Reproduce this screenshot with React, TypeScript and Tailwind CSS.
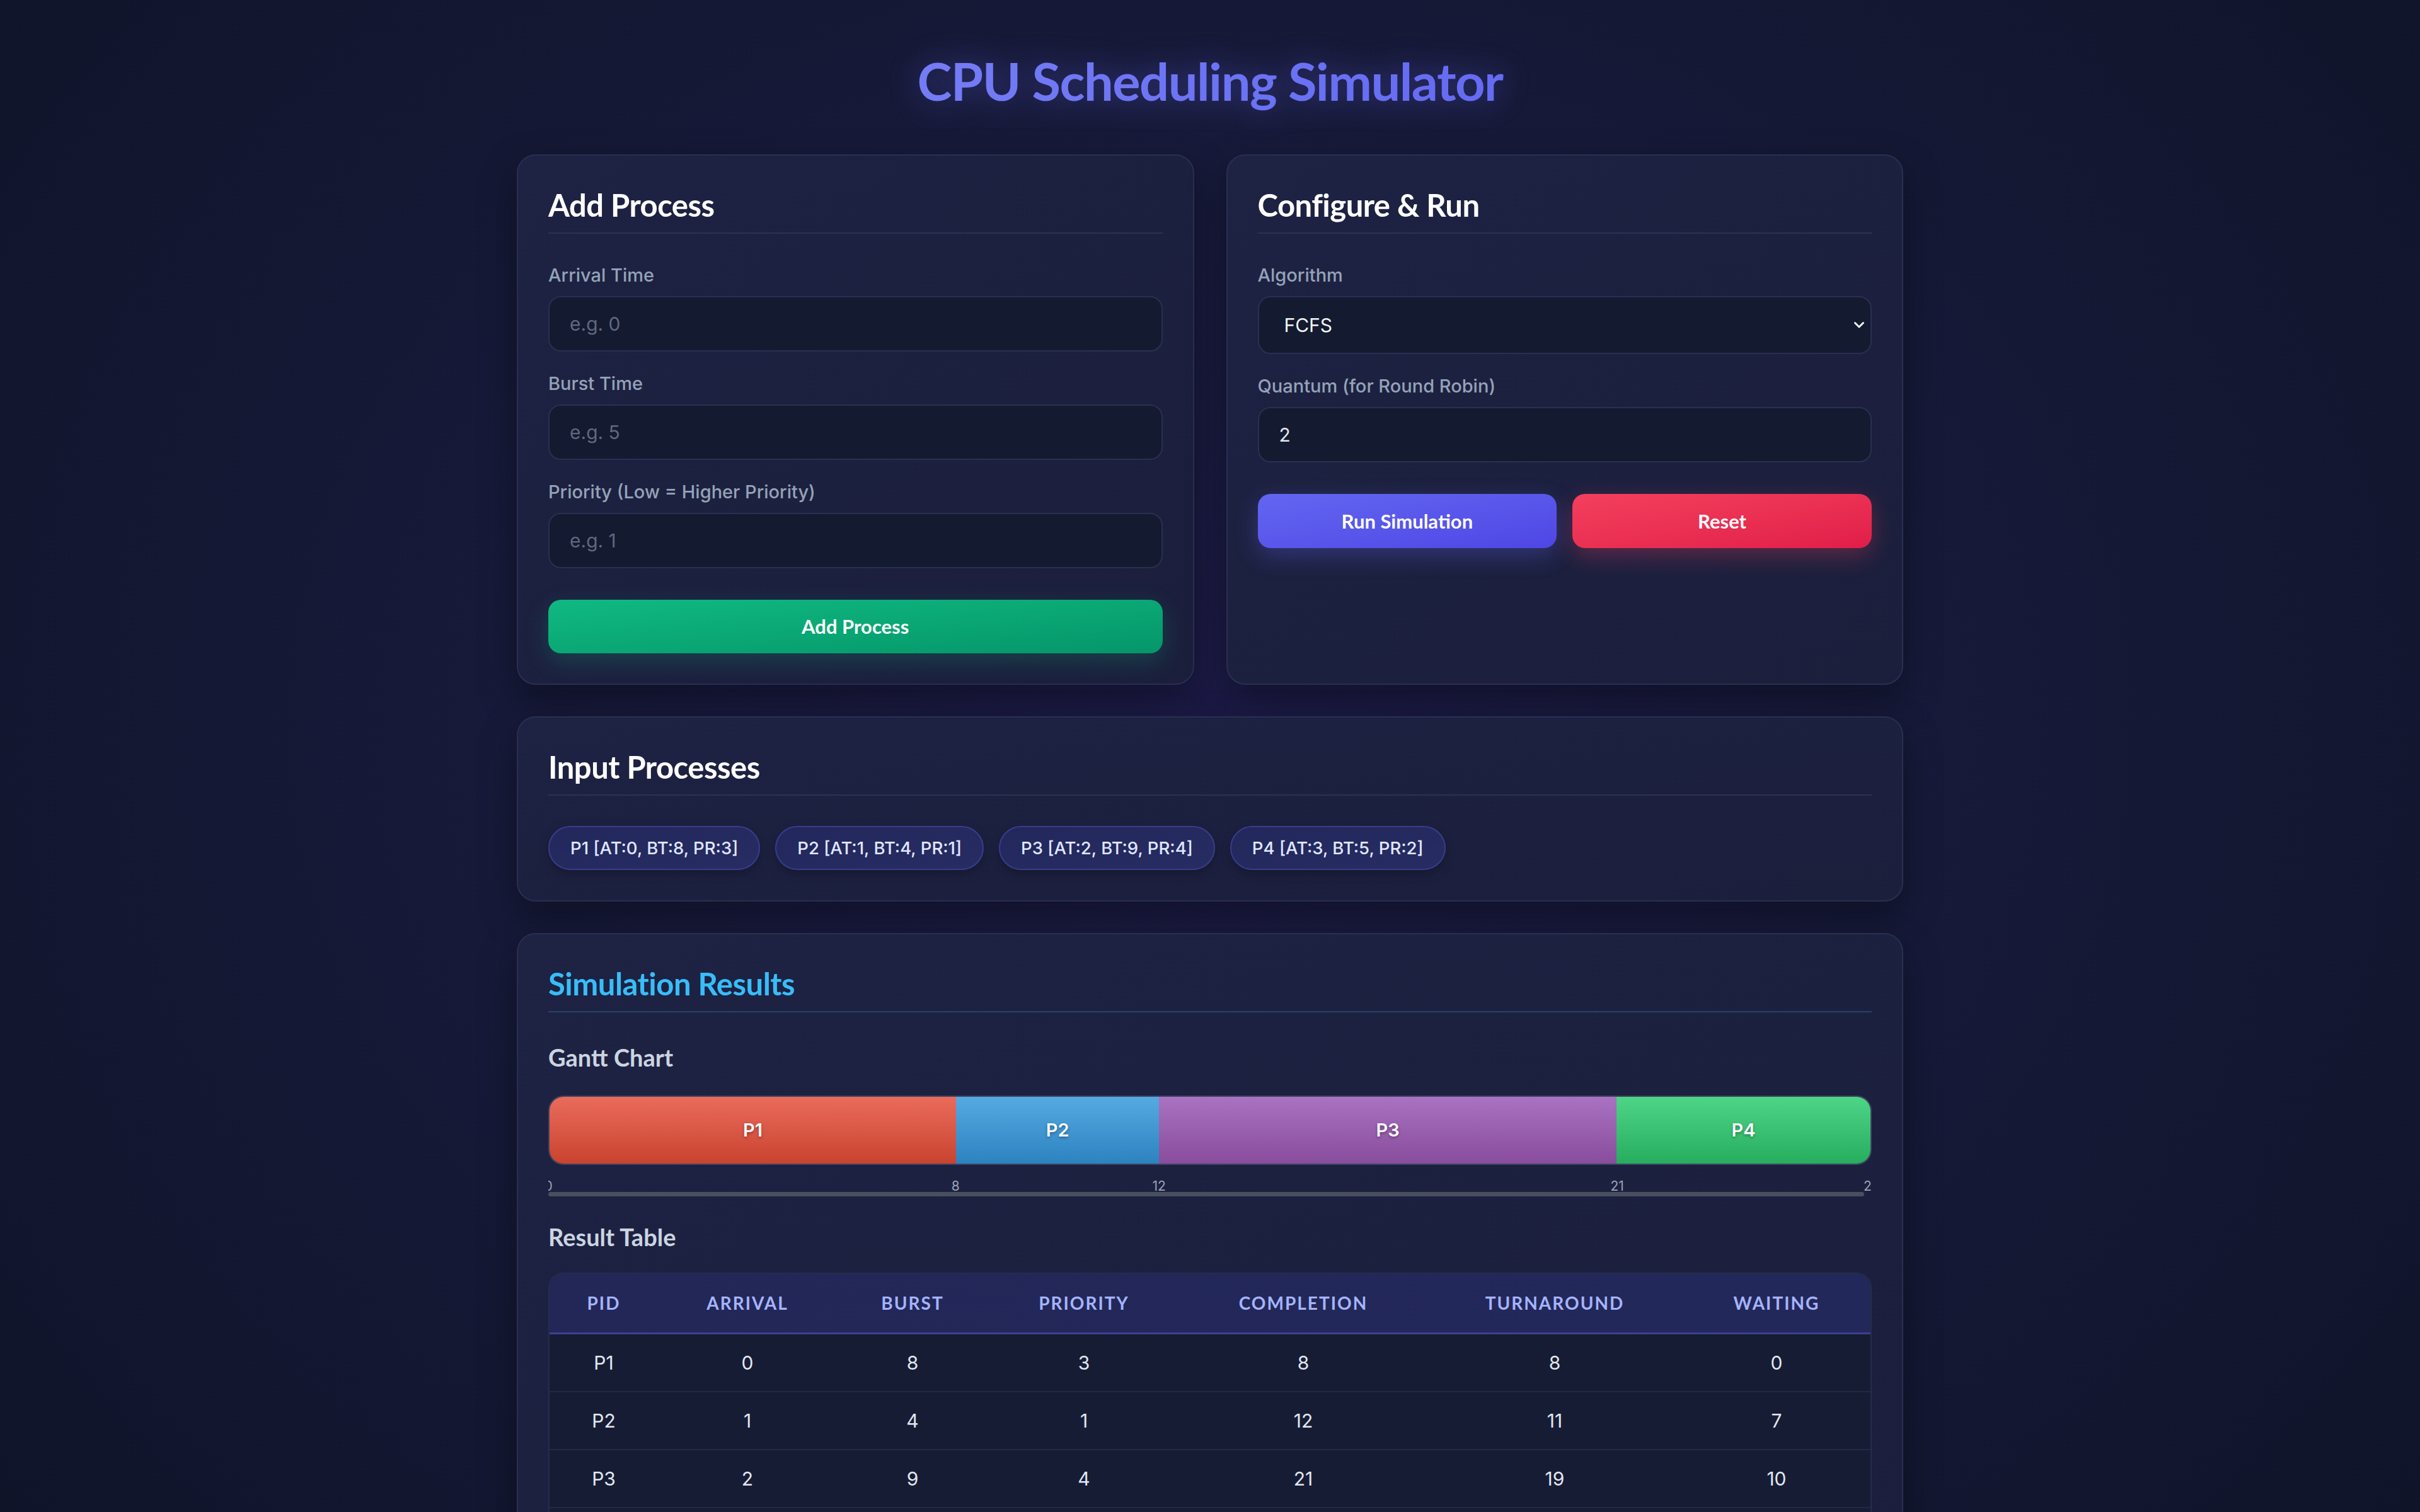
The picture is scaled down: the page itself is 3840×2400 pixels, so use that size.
import { useState } from 'react';

type Proc = { pid: string; at: number; bt: number; pr: number };

const processes: Proc[] = [
  { pid: 'P1', at: 0, bt: 8, pr: 3 },
  { pid: 'P2', at: 1, bt: 4, pr: 1 },
  { pid: 'P3', at: 2, bt: 9, pr: 4 },
  { pid: 'P4', at: 3, bt: 5, pr: 2 },
];

const segColors: Record<string, string> = {
  P1: 'bg-gradient-to-b from-[#ea6b5b] to-[#c9432f]',
  P2: 'bg-gradient-to-b from-[#55aae2] to-[#2c83c0]',
  P3: 'bg-gradient-to-b from-[#aa72c2] to-[#884d9c]',
  P4: 'bg-gradient-to-b from-[#4dd588] to-[#26ad5e]',
};

function fcfs(list: Proc[]) {
  let t = 0;
  return [...list]
    .sort((a, b) => a.at - b.at)
    .map((p) => {
      const start = Math.max(t, p.at);
      const end = start + p.bt;
      t = end;
      return { ...p, start, end, tat: end - p.at, wt: end - p.at - p.bt };
    });
}

const heading = "font-['Lato',sans-serif]";

function Card({ title, accent, children }: { title: string; accent?: boolean; children: React.ReactNode }) {
  return (
    <div className="rounded-[30px] border-2 border-[#2a2f52] bg-gradient-to-br from-[#1e2243] to-[#1b1f3c] p-[48px] shadow-[0_24px_60px_rgba(0,0,0,0.35)]">
      <h2
        className={`${heading} mb-[48px] border-b-2 pb-[14px] text-[49px] font-bold leading-[60px] tracking-[-0.5px] ${
          accent ? 'border-[#21456a] text-[#38bdf8]' : 'border-[#2c3254] text-white'
        }`}
      >
        {title}
      </h2>
      {children}
    </div>
  );
}

function Field({ label, children }: { label: string; children: React.ReactNode }) {
  return (
    <div className="flex flex-col">
      <label className="mb-[15px] text-[29px] font-medium leading-[36px] text-[#94a3b8]">{label}</label>
      {children}
    </div>
  );
}

const inputCls =
  'h-[88px] w-full rounded-[20px] border-2 border-[#2a3050] bg-[#141a2f] px-[32px] text-[30px] text-[#e2e8f0] outline-none placeholder:text-[#5f6880]';

const btnCls = `${heading} rounded-[20px] text-[31px] font-bold text-white`;

export default function App() {
  const [algo, setAlgo] = useState('FCFS');
  const rows = fcfs(processes);
  const total = rows[rows.length - 1].end;
  const ticks = [0, ...rows.map((r) => r.end)];

  return (
    <div className="min-h-screen bg-[#0f1428] bg-[radial-gradient(ellipse_at_50%_42%,#1d1b48_0%,#171a3a_40%,#0e1326_100%)] pb-[120px] pt-[78px] font-['Inter',sans-serif]">
      <div className="mx-auto w-[2200px]">
        <h1
          className={`${heading} mb-[67px] bg-gradient-to-r from-[#7f87f7] to-[#5b5ef0] bg-clip-text text-center text-[83px] font-bold leading-[100px] tracking-[-1.5px] text-transparent drop-shadow-[0_0_24px_rgba(99,102,241,0.45)]`}
        >
          CPU Scheduling Simulator
        </h1>

        <div className="flex flex-col gap-[50px]">
          <div className="grid grid-cols-2 gap-[51px]">
            <Card title="Add Process">
              <div className="flex flex-col gap-[33px]">
                <Field label="Arrival Time">
                  <input className={inputCls} placeholder="e.g. 0" />
                </Field>
                <Field label="Burst Time">
                  <input className={inputCls} placeholder="e.g. 5" />
                </Field>
                <Field label="Priority (Low = Higher Priority)">
                  <input className={inputCls} placeholder="e.g. 1" />
                </Field>
              </div>
              <button
                className={`${btnCls} mt-[50px] h-[85px] w-full bg-gradient-to-br from-[#10b981] to-[#059669] shadow-[0_12px_36px_rgba(16,185,129,0.22)]`}
              >
                Add Process
              </button>
            </Card>

            <Card title="Configure & Run">
              <div className="flex flex-col gap-[33px]">
                <Field label="Algorithm">
                  <div className="relative">
                    <select
                      value={algo}
                      onChange={(e) => setAlgo(e.target.value)}
                      className="h-[92px] w-full appearance-none rounded-[20px] border-2 border-[#2a3050] bg-[#141a2f] pl-[40px] text-[30px] text-[#f1f5f9] outline-none"
                    >
                      <option>FCFS</option>
                      <option>SJF</option>
                      <option>SRTF</option>
                      <option>Priority</option>
                      <option>Round Robin</option>
                    </select>
                    <svg
                      className="pointer-events-none absolute right-[11px] top-1/2 h-[12px] w-[18px] -translate-y-1/2"
                      viewBox="0 0 18 12"
                      fill="none"
                    >
                      <path d="M2.5 2.5 9 9l6.5-6.5" stroke="#f1f5f9" strokeWidth="3" strokeLinecap="round" strokeLinejoin="round" />
                    </svg>
                  </div>
                </Field>
                <Field label="Quantum (for Round Robin)">
                  <input className={inputCls} defaultValue="2" />
                </Field>
              </div>
              <div className="mt-[50px] grid grid-cols-2 gap-[25px]">
                <button
                  className={`${btnCls} h-[86px] bg-gradient-to-br from-[#6366f1] to-[#4f46e5] shadow-[0_12px_36px_rgba(99,102,241,0.3)]`}
                >
                  Run Simulation
                </button>
                <button
                  className={`${btnCls} h-[86px] bg-gradient-to-br from-[#f43f5e] to-[#e11d48] shadow-[0_12px_36px_rgba(244,63,94,0.3)]`}
                >
                  Reset
                </button>
              </div>
            </Card>
          </div>

          <Card title="Input Processes">
            <div className="mt-[2px] flex flex-wrap gap-[24px]">
              {processes.map((p) => (
                <span
                  key={p.pid}
                  className="rounded-full border-2 border-[#383d8c] bg-gradient-to-br from-[#22275c] to-[#272c62] px-[33px] py-[15px] text-[27.5px] font-medium leading-[36px] text-[#e0e7ff] shadow-[0_6px_16px_rgba(0,0,0,0.25)]"
                >
                  {p.pid} [AT:{p.at}, BT:{p.bt}, PR:{p.pr}]
                </span>
              ))}
            </div>
          </Card>

          <Card title="Simulation Results" accent>
            <h3 className={`${heading} mb-[38px] mt-[4px] text-[38px] font-bold leading-[46px] text-[#cbd5e1]`}>Gantt Chart</h3>
            <div className="flex h-[110px] overflow-hidden rounded-[24px] border-2 border-[#3f4560]">
              {rows.map((r) => (
                <div
                  key={r.pid}
                  className={`flex items-center justify-center text-[29px] font-semibold text-[#f8fafc] [text-shadow:0_2px_4px_rgba(0,0,0,0.35)] ${segColors[r.pid]}`}
                  style={{ flexGrow: r.bt, flexBasis: 0 }}
                >
                  {r.pid}
                </div>
              ))}
            </div>
            <div className="relative h-[50px] overflow-hidden">
              {ticks.map((t) => (
                <span
                  key={t}
                  className="absolute bottom-[6px] -translate-x-1/2 text-[21px] leading-none text-[#9aa3b5]"
                  style={{ left: `${(t / total) * 100}%` }}
                >
                  {t}
                </span>
              ))}
              <div className="absolute bottom-0 left-0 right-[12px] h-[7px] rounded-full bg-[#4a4f60]" />
            </div>

            <h3 className={`${heading} mb-[34px] mt-[41px] text-[38px] font-bold leading-[46px] text-[#cbd5e1]`}>Result Table</h3>
            <div className="overflow-hidden rounded-[24px] border-2 border-[#262c4a]">
              <table className="w-full table-fixed border-collapse">
                <thead>
                  <tr className="border-b-[3px] border-[#3b418f] bg-gradient-to-r from-[#222758] to-[#23285a]">
                    {[
                      ['PID', 'w-[172px]'],
                      ['Arrival', 'w-[284px]'],
                      ['Burst', 'w-[240px]'],
                      ['Priority', 'w-[304px]'],
                      ['Completion', 'w-[392px]'],
                      ['Turnaround', 'w-[406px]'],
                      ['Waiting', ''],
                    ].map(([h, w]) => (
                      <th
                        key={h}
                        className={`${heading} ${w} py-[30px] text-center text-[28px] font-bold uppercase leading-[33px] tracking-[2px] text-[#a5b4fc]`}
                      >
                        {h}
                      </th>
                    ))}
                  </tr>
                </thead>
                <tbody className="bg-[#171c35]">
                  {rows.map((r) => (
                    <tr key={r.pid} className="border-b-2 border-[#232944]">
                      {[r.pid, r.at, r.bt, r.pr, r.end, r.tat, r.wt].map((v, i) => (
                        <td key={i} className="py-[27px] text-center text-[30px] leading-[36px] text-[#e2e8f0]">
                          {v}
                        </td>
                      ))}
                    </tr>
                  ))}
                </tbody>
              </table>
            </div>
            <div className="mt-[40px] grid grid-cols-2 gap-[25px] text-[30px] text-[#cbd5e1]">
              <div>
                Average Turnaround Time: <span className="font-semibold text-white">{(rows.reduce((s, r) => s + r.tat, 0) / rows.length).toFixed(2)}</span>
              </div>
              <div>
                Average Waiting Time: <span className="font-semibold text-white">{(rows.reduce((s, r) => s + r.wt, 0) / rows.length).toFixed(2)}</span>
              </div>
            </div>
          </Card>
        </div>
      </div>
    </div>
  );
}
